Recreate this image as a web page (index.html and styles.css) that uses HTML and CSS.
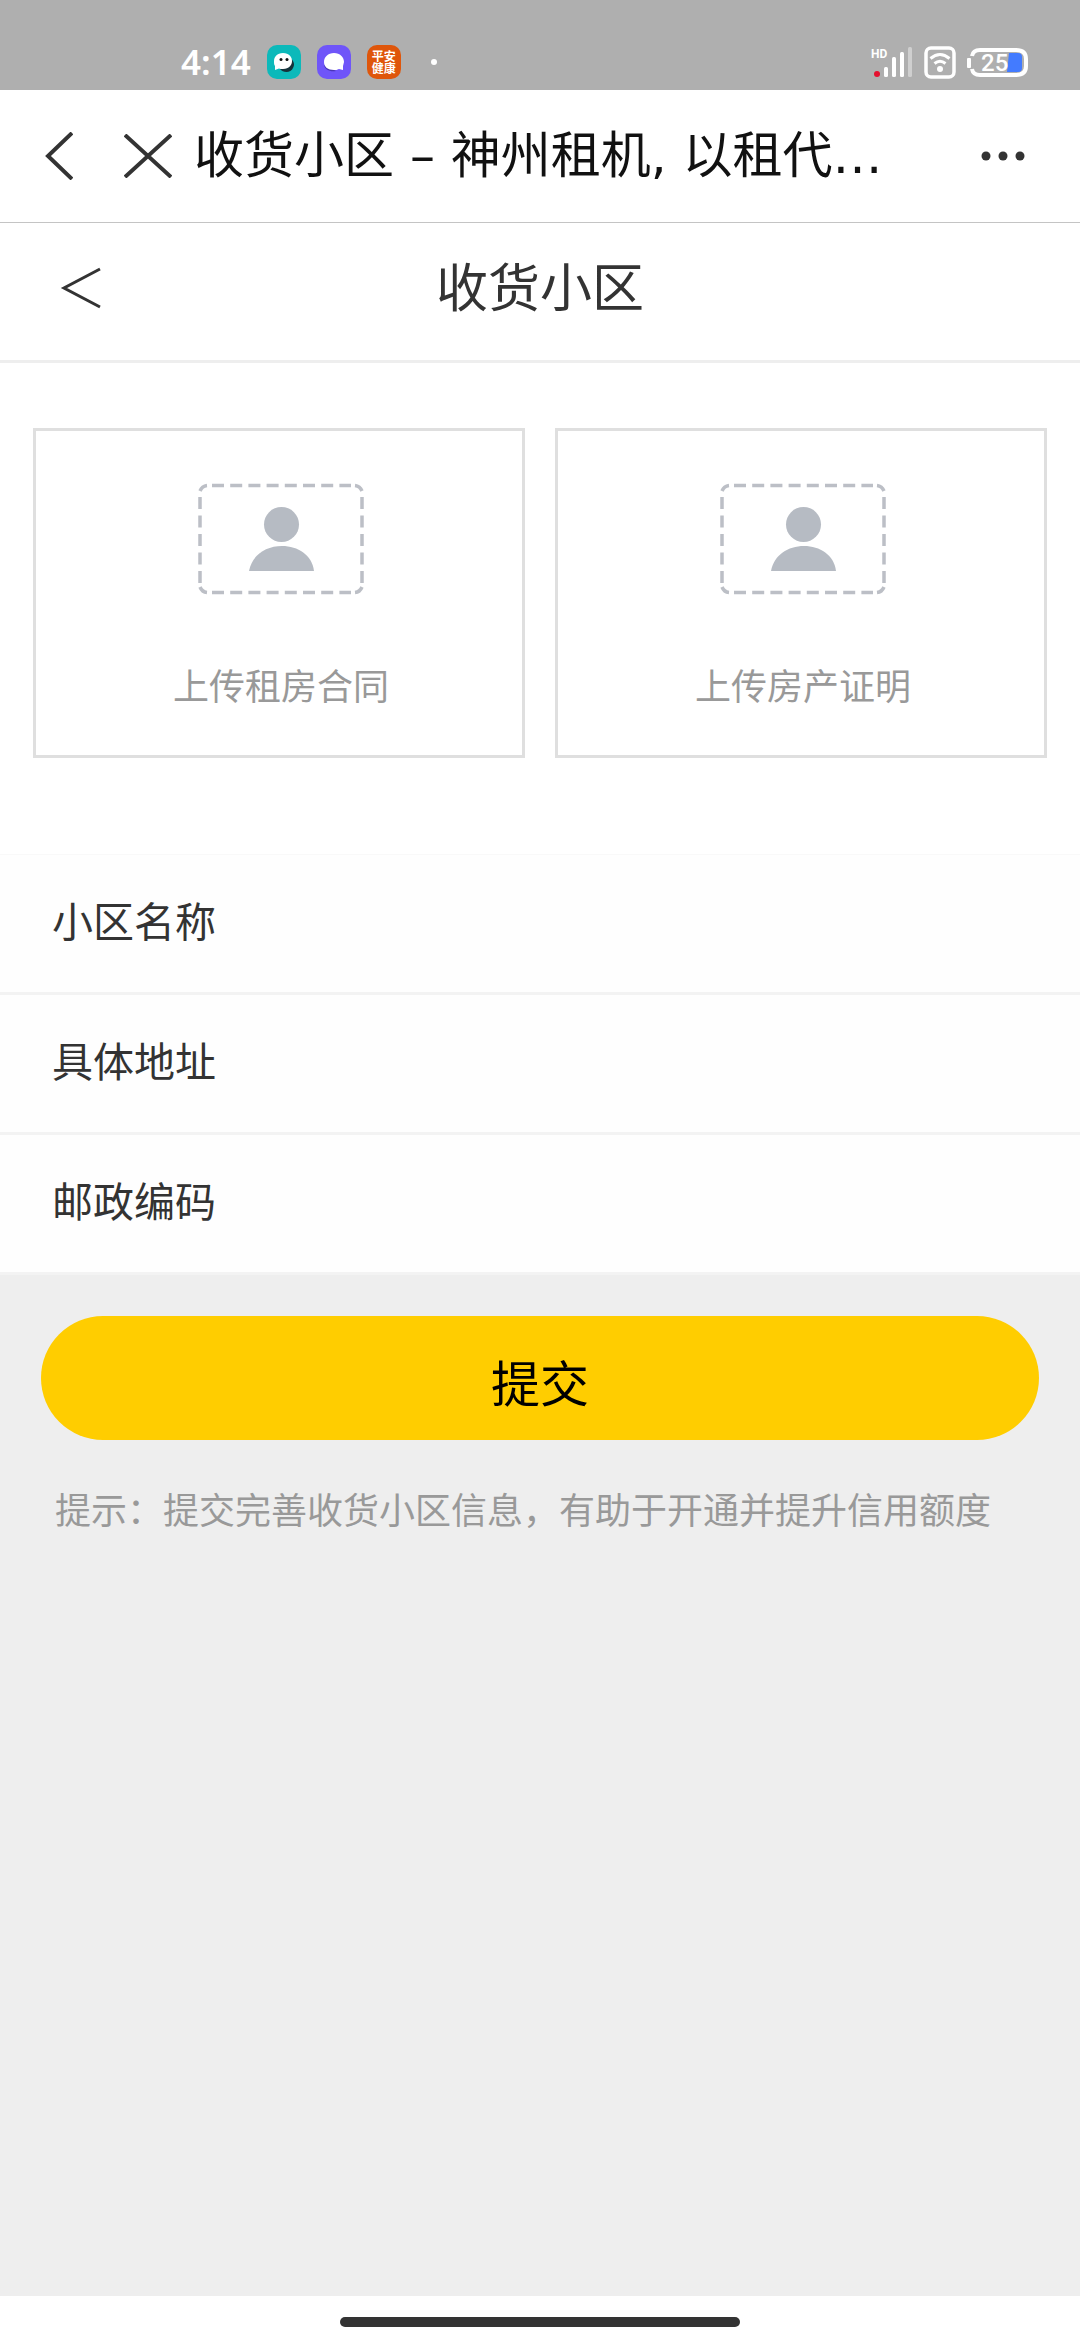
FILE: index.html
```html
<!DOCTYPE html>
<html lang="zh-CN">
<head>
    <meta charset="UTF-8">
    <meta name="viewport" content="width=device-width, initial-scale=1.0">
    <title>收货小区</title>
    <link rel="stylesheet" href="styles.css">
</head>
<body>
    <div class="status-bar">
        <div class="status-left">
            <span class="clock">4:14</span>
            <svg width="34" height="34" viewBox="0 0 34 34">
                <rect width="34" height="34" rx="10" fill="#0cb9ba"/>
                <path d="M13 24c3 4 11 4 13-1 2-3 1-7-2-9z" fill="#16323a"/>
                <path d="M16 8c6 0 9 4 9 8s-3 8-9 8c-2 0-3 0-4-.6L8 25v-4c-1-1-1-3-1-5 0-4 3-8 9-8z" fill="#fff"/>
                <circle cx="14" cy="14.5" r="1.5" fill="#111"/>
                <circle cx="20" cy="14.5" r="1.5" fill="#111"/>
            </svg>
            <svg width="34" height="34" viewBox="0 0 34 34">
                <rect width="34" height="34" rx="10" fill="#6f55f9"/>
                <path d="M7 20c1 5 6 7 12 6z" fill="#4a36b5"/>
                <path d="M17 8c6 0 10 4 10 9l-1 4v4l-4-1c-2 1-3 1-5 1-6 0-10-3-10-8s4-9 10-9z" fill="#fff"/>
            </svg>
            <div class="app-badge"><span>平安健康</span></div>
            <span class="more-dot"></span>
        </div>
        <div class="status-right">
            <svg width="43" height="34" viewBox="0 0 43 34">
                <text class="hd-text" x="1" y="13">HD</text>
                <circle cx="7" cy="29" r="3" fill="#e5102f"/>
                <rect x="14" y="22" width="4" height="10" rx="1.5" fill="#fff"/>
                <rect x="22" y="12" width="4" height="20" rx="1.5" fill="#fff"/>
                <rect x="30" y="7" width="4" height="25" rx="1.5" fill="#fff"/>
                <rect x="38" y="2" width="4" height="30" rx="1.5" fill="#fff" opacity=".4"/>
            </svg>
            <svg width="32" height="34" viewBox="0 0 32 34" fill="none" stroke="#fff" stroke-width="3.5">
                <rect x="2" y="3" width="28" height="29" rx="5"/>
                <path d="M6.5 13.5q9.500-8 19 0M10.500 18.500q5.500-4.500 11 0" stroke-width="3"/>
                <circle cx="16" cy="24" r="3" fill="#fff" stroke="none"/>
            </svg>
            <svg width="62" height="34" viewBox="0 0 62 34">
                <path d="M5 11q1-6 8-6h36q10 0 10 9v7q0 9-10 9H13q-7 0-8-6" fill="none" stroke="#fff" stroke-width="4"/>
                <rect x="0" y="13" width="4" height="10" rx="1" fill="#fff"/>
                <path d="M42 8h9q4 0 4 4v11q0 4-4 4H40z" fill="#437bff"/>
                <text class="battery-text" x="14" y="26">25</text>
            </svg>
        </div>
    </div>

    <div class="nav-bar">
        <button type="button" class="icon-btn" aria-label="返回">
            <svg width="28" height="48" viewBox="0 0 28 48" fill="none" stroke="#333" stroke-width="4">
                <path d="M27 1L3 24l24 23"/>
            </svg>
        </button>
        <button type="button" class="icon-btn close-btn" aria-label="关闭">
            <svg width="48" height="44" viewBox="0 0 48 44" fill="none" stroke="#333" stroke-width="4">
                <path d="M1 1l46 42M47 1L1 43"/>
            </svg>
        </button>
        <div class="nav-title">收货小区 – 神州租机, 以租代…</div>
        <button type="button" class="icon-btn" aria-label="更多">
            <svg width="44" height="10" viewBox="0 0 44 10" fill="#333">
                <circle cx="5" cy="5" r="4.5"/>
                <circle cx="22" cy="5" r="4.5"/>
                <circle cx="39" cy="5" r="4.5"/>
            </svg>
        </button>
    </div>

    <header class="page-header">
        <a href="#" class="page-back" aria-label="返回">
            <svg width="41" height="42" viewBox="0 0 41 42" fill="none" stroke="#333" stroke-width="3">
                <path d="M40 2L4 21l36 19"/>
            </svg>
        </a>
        <h1>收货小区</h1>
    </header>

    <form class="community-form">
        <div class="upload-list">
            <button type="button" class="upload-card">
                <svg width="166" height="112" viewBox="0 0 166 112">
                    <g fill="none" stroke="#bcbfc6" stroke-width="3.5">
                        <path d="M14 2.500h139M14 109.500h139" stroke-dasharray="12 6.200"/>
                        <path d="M2 14v87M164 14v87" stroke-dasharray="12 6.500"/>
                        <path d="M2 8q2-5 7-5.500M157 2.500q5 .5 7 5.500M2 104q2 5 7 5.500M157 109.500q5-.5 7-5.500"/>
                    </g>
                    <circle cx="83.500" cy="41.500" r="17.500" fill="#b6bbc3"/>
                    <path d="M51 88c3-16 17-25 33-25s30 9 32 25z" fill="#b6bbc3"/>
                </svg>
                <span>上传租房合同</span>
            </button>
            <button type="button" class="upload-card">
                <svg width="166" height="112" viewBox="0 0 166 112">
                    <g fill="none" stroke="#bcbfc6" stroke-width="3.5">
                        <path d="M14 2.500h139M14 109.500h139" stroke-dasharray="12 6.200"/>
                        <path d="M2 14v87M164 14v87" stroke-dasharray="12 6.500"/>
                        <path d="M2 8q2-5 7-5.500M157 2.500q5 .5 7 5.500M2 104q2 5 7 5.500M157 109.500q5-.5 7-5.500"/>
                    </g>
                    <circle cx="83.500" cy="41.500" r="17.500" fill="#b6bbc3"/>
                    <path d="M51 88c3-16 17-25 33-25s30 9 32 25z" fill="#b6bbc3"/>
                </svg>
                <span>上传房产证明</span>
            </button>
        </div>

        <div class="field-list">
            <div class="field">
                <label for="name">小区名称</label>
                <input type="text" id="name" name="name">
            </div>
            <div class="field">
                <label for="address">具体地址</label>
                <input type="text" id="address" name="address">
            </div>
            <div class="field">
                <label for="postcode">邮政编码</label>
                <input type="text" id="postcode" name="postcode" inputmode="numeric">
            </div>
        </div>

        <div class="form-footer">
            <button type="submit" class="submit-btn">提交</button>
            <p class="hint">提示：提交完善收货小区信息，有助于开通并提升信用额度</p>
        </div>
    </form>

    <div class="home-bar"><span></span></div>
</body>
</html>
```
FILE: styles.css
```css
* {
    box-sizing: border-box;
}
body {
    margin: 0;
    min-height: 100vh;
    display: flex;
    flex-direction: column;
    font-family: "Noto Sans CJK SC", sans-serif;
    color: #333;
    background-color: #eee;
}
button, input {
    font-family: inherit;
    color: inherit;
    border: none;
    background: none;
    padding: 0;
}
svg {
    display: block;
    flex-shrink: 0;
}

/* status bar */
.status-bar {
    display: flex;
    justify-content: space-between;
    height: 90px;
    padding: 34px 51px 0 181px;
    background-color: #afafaf;
    color: #fff;
}
.status-left, .status-right {
    display: flex;
    align-items: center;
    height: 56px;
}
.status-left {
    gap: 16px;
}
.status-right {
    gap: 11px;
}
.clock {
    font-family: "Noto Sans", sans-serif;
    font-size: 35px;
    font-weight: 600;
    line-height: 56px;
}
.app-badge {
    width: 34px;
    height: 34px;
    padding: 5px 4px;
    border-radius: 10px;
    background-color: #df560b;
    font-size: 12px;
    font-weight: 700;
    line-height: 12px;
    text-align: center;
}
.app-badge span {
    display: block;
}
.more-dot {
    width: 6px;
    height: 6px;
    margin-left: 14px;
    border-radius: 50%;
    background-color: #fff;
}
.hd-text {
    font-family: Roboto, sans-serif;
    font-size: 12px;
    font-weight: 700;
    fill: #fff;
}
.battery-text {
    font-family: Roboto, sans-serif;
    font-size: 24px;
    font-weight: 500;
    fill: #fff;
}

/* browser bar */
.nav-bar {
    display: flex;
    align-items: center;
    height: 133px;
    padding: 0 55px 0 45px;
    border-bottom: 1px solid #c4c4c4;
    background-color: #fff;
}
.icon-btn {
    cursor: pointer;
}
.close-btn {
    margin-left: 51px;
}
.nav-title {
    flex: 1;
    min-width: 0;
    margin-left: 22px;
    overflow: hidden;
    white-space: nowrap;
    font-family: "DejaVu Sans", "Noto Sans CJK SC", sans-serif;
    font-size: 50px;
    line-height: 72px;
    color: #111;
}

/* page header */
.page-header {
    display: grid;
    grid-template-columns: 1fr auto 1fr;
    align-items: center;
    height: 140px;
    padding: 0 60px 8px;
    border-bottom: 3px solid #eee;
    background-color: #fff;
}
.page-header h1 {
    margin: 0;
    padding-bottom: 6px;
    font-size: 52px;
    font-weight: 400;
    line-height: 76px;
}
.page-back {
    justify-self: start;
}

.community-form {
    flex: 1;
}
.upload-list {
    display: grid;
    grid-template-columns: 1fr 1fr;
    gap: 30px;
    padding: 65px 33px 96px;
    background-color: #fff;
}
.upload-card {
    display: flex;
    flex-direction: column;
    align-items: center;
    gap: 62px;
    padding: 52px 0 44px 4px;
    border: 3px solid #dfdfdf;
    color: #999;
    font-size: 36px;
    line-height: 54px;
    cursor: pointer;
}

.field-list {
    border-top: 1px solid #f9f9f9;
    background-color: #fefefe;
}
.field {
    display: flex;
    align-items: center;
    height: 140px;
    padding: 0 52px 10px;
    border-bottom: 3px solid #f3f3f3;
    font-size: 41px;
    line-height: 60px;
}
.field input {
    flex: 1;
    min-width: 0;
    margin-left: 40px;
    font-size: 41px;
    outline: none;
}

.form-footer {
    padding: 41px;
}
.submit-btn {
    display: block;
    width: 100%;
    height: 124px;
    padding-top: 4px;
    border-radius: 62px;
    background-color: #ffcd00;
    color: #000;
    font-size: 49px;
    cursor: pointer;
}
.hint {
    margin: 40px 0 0;
    padding-left: 14px;
    font-size: 36px;
    line-height: 56px;
    color: #999;
}

.home-bar {
    display: flex;
    align-items: center;
    justify-content: center;
    height: 44px;
    padding-top: 8px;
    background-color: #fff;
}
.home-bar span {
    width: 37%;
    height: 10px;
    border-radius: 5px;
    background-color: #333;
}
```
